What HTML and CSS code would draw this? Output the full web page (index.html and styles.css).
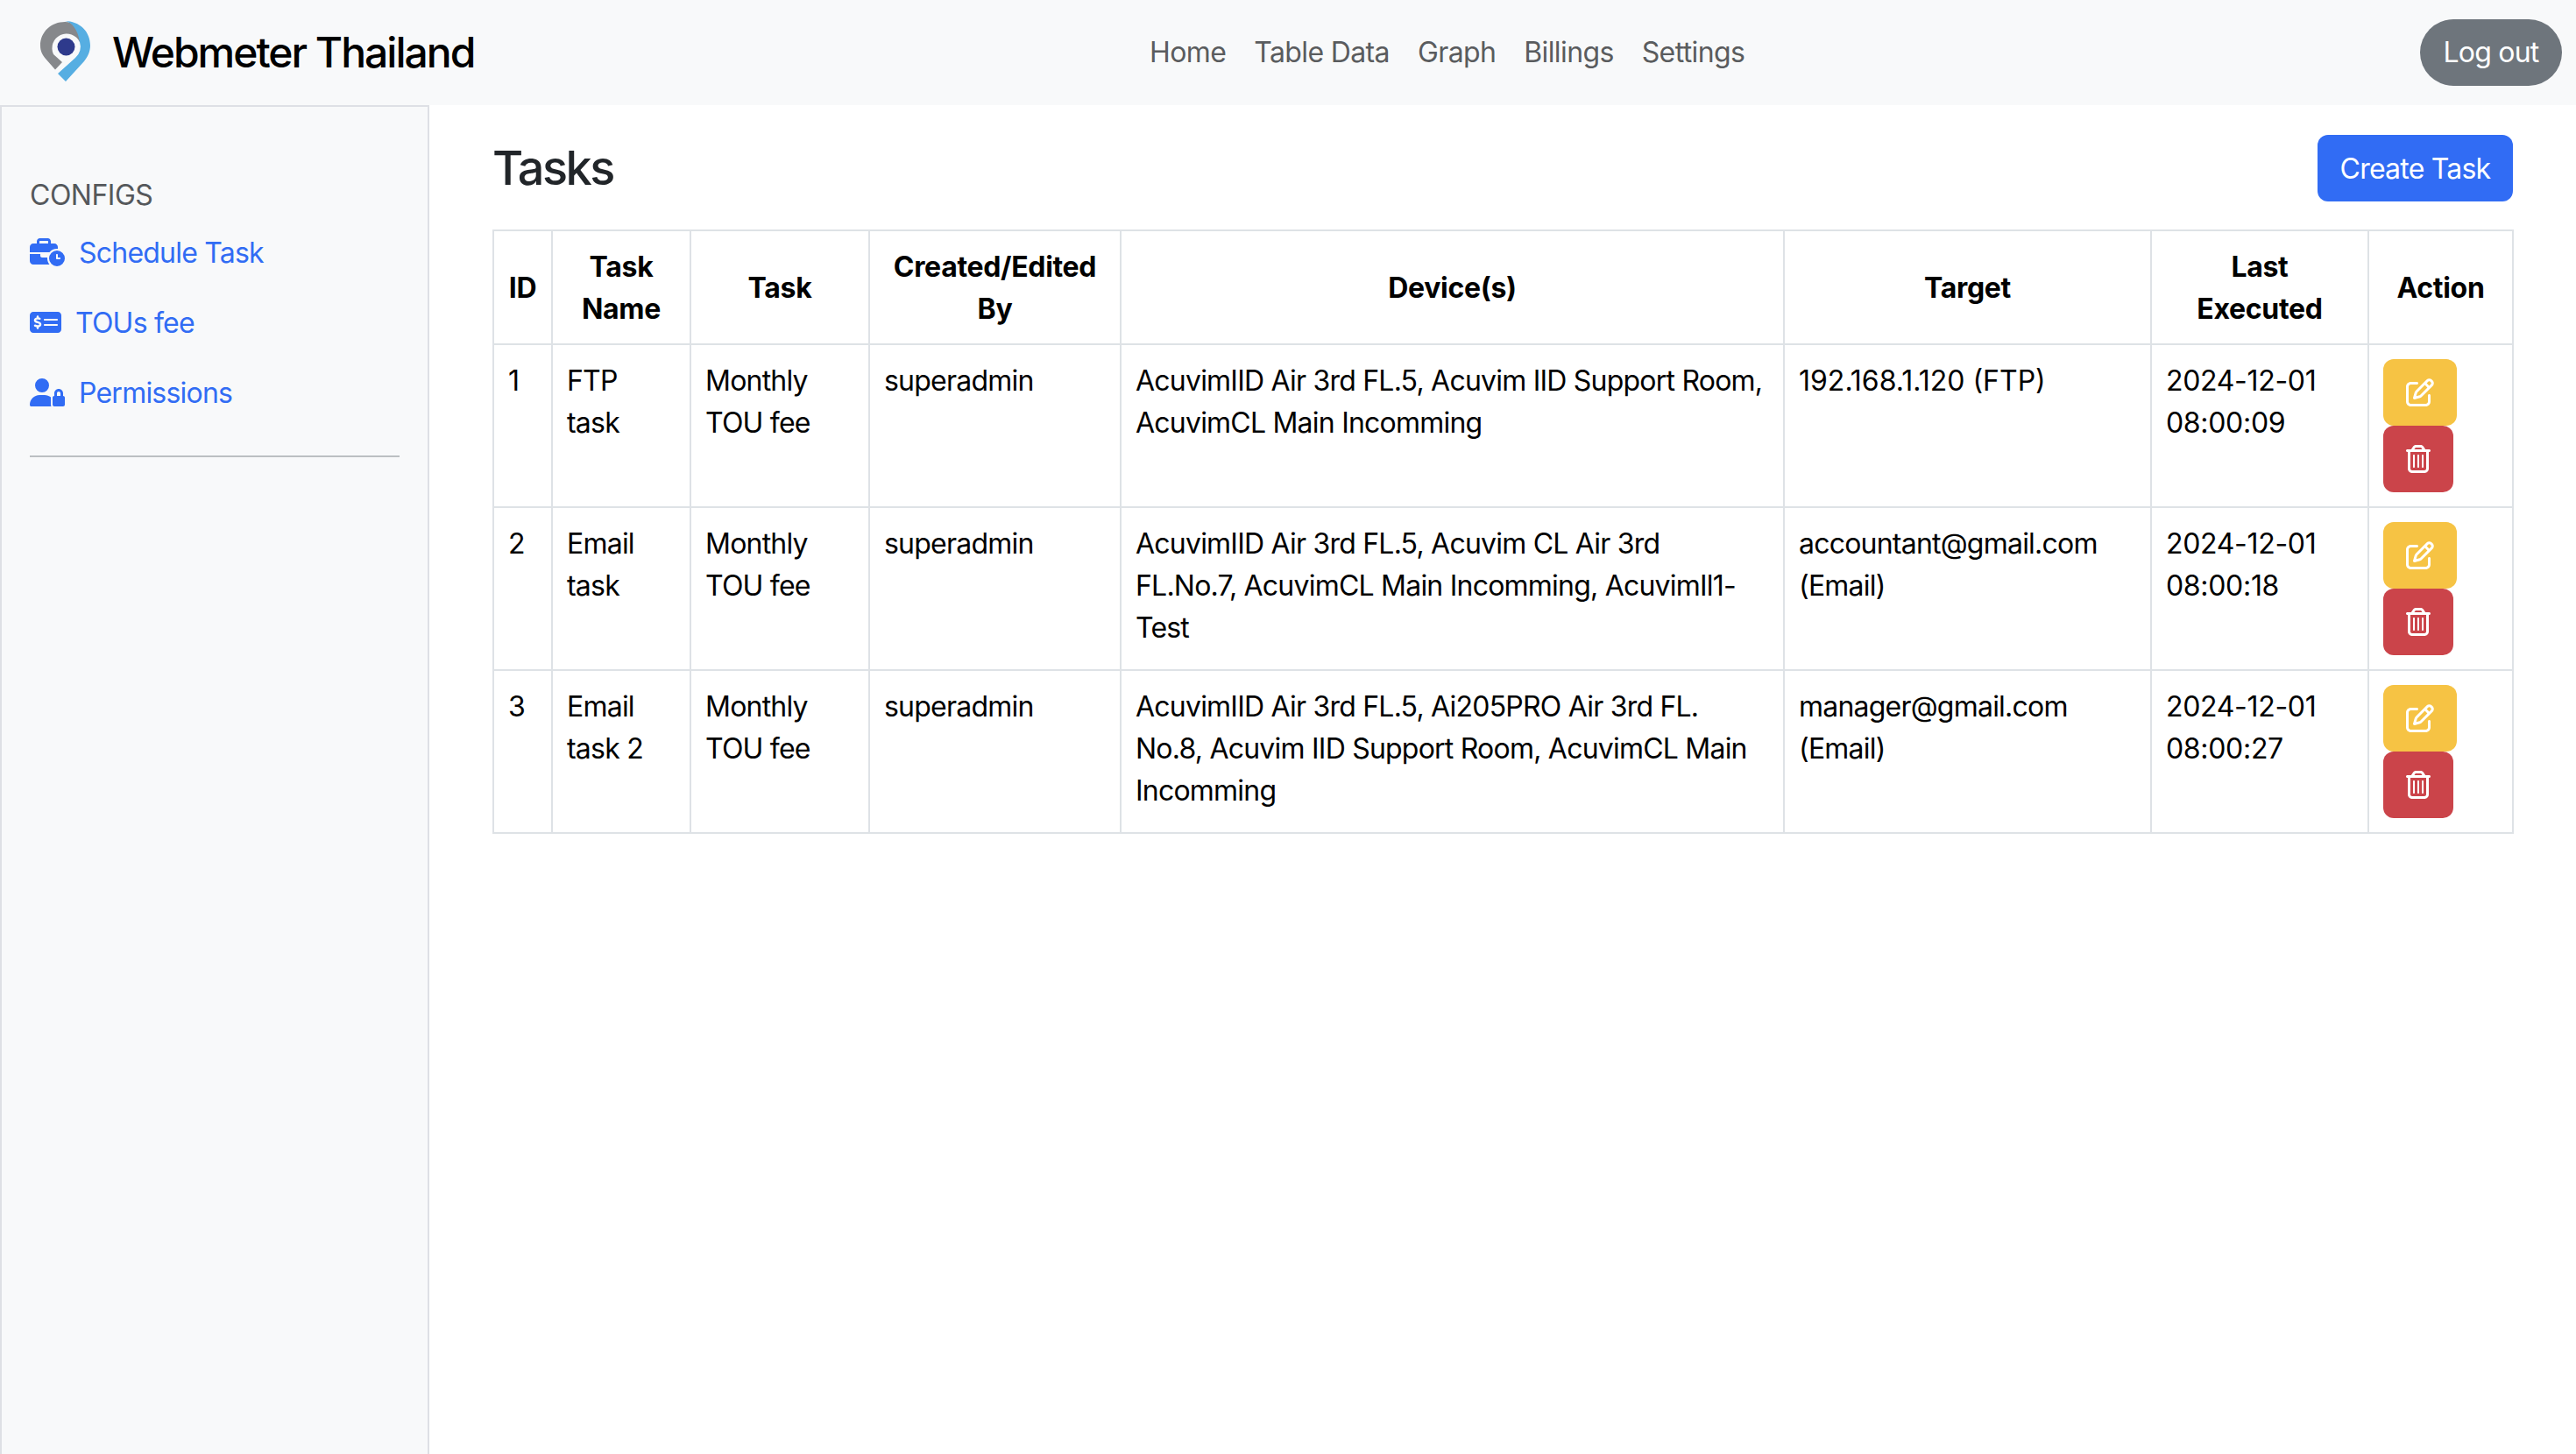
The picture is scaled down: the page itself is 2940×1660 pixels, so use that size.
FILE: index.html
```html
<!DOCTYPE html>
<html lang="en">
<head>
<meta charset="utf-8">
<title>Tasks - Webmeter Thailand</title>
<link rel="stylesheet" href="styles.css">
</head>
<body>
<svg class="defs" width="0" height="0" aria-hidden="true">
  <symbol id="i-edit" viewBox="0 0 512 512"><path d="M441 58.9L453.1 71c9.4 9.4 9.4 24.6 0 33.9L424 134.1 377.9 88 407 58.9c9.4-9.4 24.6-9.4 33.9 0zM209.8 256.2L344 121.9 390.1 168 255.8 302.2c-2.9 2.9-6.5 5-10.4 6.1l-58.5 16.7 16.7-58.5c1.1-3.9 3.2-7.5 6.1-10.4zM373.1 25L175.8 222.2c-8.7 8.7-15 19.4-18.3 31.1l-28.6 100c-2.4 8.4-.1 17.4 6.1 23.6s15.2 8.5 23.6 6.1l100-28.6c11.8-3.4 22.5-9.7 31.1-18.3L487 138.9c28.1-28.1 28.1-73.7 0-101.8L474.9 25C446.8-3.1 401.2-3.1 373.1 25zM88 64C39.4 64 0 103.4 0 152V424c0 48.6 39.4 88 88 88H360c48.6 0 88-39.4 88-88V312c0-13.3-10.7-24-24-24s-24 10.7-24 24V424c0 22.1-17.9 40-40 40H88c-22.1 0-40-17.9-40-40V152c0-22.1 17.9-40 40-40H200c13.3 0 24-10.7 24-24s-10.7-24-24-24H88z"/></symbol>
  <symbol id="i-trash" viewBox="0 0 448 512"><path d="M170.5 51.6L151.5 80h145l-19-28.4c-1.5-2.2-4-3.6-6.7-3.6H177.1c-2.7 0-5.2 1.3-6.7 3.6zm147-26.6L354.2 80H368h48 8c13.3 0 24 10.7 24 24s-10.7 24-24 24h-8V432c0 44.2-35.8 80-80 80H112c-44.2 0-80-35.8-80-80V128H24c-13.3 0-24-10.7-24-24S10.7 80 24 80h8H80 93.8l36.7-55.1C140.9 9.4 158.4 0 177.1 0h93.7c18.7 0 36.2 9.4 46.6 24.9zM80 128V432c0 17.7 14.3 32 32 32H336c17.7 0 32-14.3 32-32V128H80zm80 64V400c0 8.8-7.2 16-16 16s-16-7.2-16-16V192c0-8.8 7.2-16 16-16s16 7.2 16 16zm80 0V400c0 8.8-7.2 16-16 16s-16-7.2-16-16V192c0-8.8 7.2-16 16-16s16 7.2 16 16zm80 0V400c0 8.8-7.2 16-16 16s-16-7.2-16-16V192c0-8.8 7.2-16 16-16s16 7.2 16 16z"/></symbol>
</svg>

<header class="navbar">
  <a class="brand" href="#">
    <svg class="logo" viewBox="0 0 80 90" width="80" height="90" aria-hidden="true">
      <path fill="#86888b" d="M27 63.5L16 51C12 46 10 42 10 36C10 20 23 9 38 9C48 9 54 16 56 32L55 32A16.5 16.5 0 0 0 25 46L35 55Z"/>
      <path fill="#56aee2" d="M38 8C55 8 67 20 67 36C67 43 64 49 60 54L39 77L30 68L50 50A16.5 16.5 0 0 0 55 32C53 18 46 9 38 8Z"/>
      <circle fill="#2e3a8c" cx="39.5" cy="37.5" r="10"/>
    </svg>
    <span class="brand-name">Webmeter Thailand</span>
  </a>
  <nav class="nav-links">
    <a href="#">Home</a>
    <a href="#">Table Data</a>
    <a href="#">Graph</a>
    <a href="#">Billings</a>
    <a href="#">Settings</a>
  </nav>
  <button class="btn btn-logout">Log out</button>
</header>

<div class="layout">
  <aside class="sidebar">
    <div class="side-heading">CONFIGS</div>
    <a class="side-link" href="#">
      <svg class="ic-40" viewBox="0 0 640 512" aria-hidden="true"><path d="M184 48H328c4.4 0 8 3.6 8 8V96H176V56c0-4.4 3.6-8 8-8zm-56 8V96H64C28.7 96 0 124.7 0 160v96H192 352h8.2c32.3-39.1 81.1-64 135.8-64c5.4 0 10.7 .2 16 .7V160c0-35.3-28.7-64-64-64H384V56c0-30.9-25.1-56-56-56H184c-30.9 0-56 25.1-56 56zM320 352H224c-17.7 0-32-14.3-32-32V288H0V416c0 35.3 28.7 64 64 64H360.2C335.1 449.6 320 410.5 320 368c0-5.4 .2-10.7 .7-16l-.7 0zm320 16a144 144 0 1 0 -288 0 144 144 0 1 0 288 0zM496 288c8.8 0 16 7.2 16 16v48h32c8.8 0 16 7.2 16 16s-7.2 16-16 16H496c-8.8 0-16-7.2-16-16V304c0-8.8 7.2-16 16-16z"/></svg>
      <span>Schedule Task</span>
    </a>
    <a class="side-link" href="#">
      <svg class="ic-36" viewBox="0 0 576 512" aria-hidden="true"><path d="M64 64C28.7 64 0 92.7 0 128V384c0 35.3 28.7 64 64 64H512c35.3 0 64-28.7 64-64V128c0-35.3-28.7-64-64-64H64zM272 192H496c8.8 0 16 7.2 16 16s-7.2 16-16 16H272c-8.8 0-16-7.2-16-16s7.2-16 16-16zM256 304c0-8.8 7.2-16 16-16H496c8.8 0 16 7.2 16 16s-7.2 16-16 16H272c-8.8 0-16-7.2-16-16zM164 152v13.9c7.5 1.2 14.6 2.9 21.1 4.7c10.7 2.8 17 13.8 14.2 24.5s-13.8 17-24.5 14.2c-11-2.9-21.6-5-31.2-5.2c-7.9-.1-16 1.8-21.5 5c-4.8 2.8-6.2 5.6-6.2 9.3c0 1.8 .1 3.5 5.3 6.7c6.3 3.8 15.5 6.7 28.3 10.5l.7 .2c11.2 3.4 25.6 7.7 37.1 15c12.9 8.1 24.3 21.3 24.6 41.6c.3 20.9-10.5 36.1-24.8 45c-7.2 4.5-15.2 7.3-23.2 9V360c0 11-9 20-20 20s-20-9-20-20V345.4c-10.3-2.2-20-5.5-28.2-8.4l0 0 0 0c-2.1-.7-4.1-1.4-6.1-2.1c-10.5-3.5-16.1-14.8-12.6-25.3s14.8-16.1 25.3-12.6c2.5 .8 4.9 1.7 7.2 2.4c13.6 4.6 24 8.1 35.1 8.5c8.6 .3 16.5-1.6 21.4-4.7c4.1-2.5 6-5.5 5.9-10.5c0-2.9-.8-5-5.9-8.2c-6.3-4-15.4-6.9-28-10.7l-1.7-.5c-10.9-3.3-24.6-7.4-35.6-14c-12.7-7.7-24.6-20.5-24.7-40.7c-.1-21.1 11.8-35.7 25.8-43.9c6.9-4.1 14.5-6.8 22.2-8.5V152c0-11 9-20 20-20s20 9 20 20z"/></svg>
      <span>TOUs fee</span>
    </a>
    <a class="side-link" href="#">
      <svg class="ic-40" viewBox="0 0 640 512" aria-hidden="true"><path d="M224 256A128 128 0 1 0 224 0a128 128 0 1 0 0 256zm-45.7 48C79.8 304 0 383.8 0 482.3C0 498.7 13.3 512 29.7 512H392.6c-5.4-9.4-8.6-20.3-8.6-32V352c0-2.1 .1-4.2 .3-6.3c-31-26-71-41.7-114.6-41.7H178.3zM528 240c17.7 0 32 14.3 32 32v48H496V272c0-17.7 14.3-32 32-32zm-80 32v48c-17.7 0-32 14.3-32 32V480c0 17.7 14.3 32 32 32H608c17.7 0 32-14.3 32-32V352c0-17.7-14.3-32-32-32V272c0-44.2-35.8-80-80-80s-80 35.8-80 80z"/></svg>
      <span>Permissions</span>
    </a>
    <hr class="side-rule">
  </aside>

  <main class="content">
    <div class="title-row">
      <h1 class="page-title">Tasks</h1>
      <button class="btn btn-create">Create Task</button>
    </div>
    <table class="tasks">
      <colgroup>
        <col class="c-id"><col class="c-name"><col class="c-task"><col class="c-by"><col class="c-dev"><col class="c-target"><col class="c-last"><col class="c-act">
      </colgroup>
      <thead>
        <tr>
          <th>ID</th><th>Task Name</th><th>Task</th><th>Created/Edited By</th><th>Device(s)</th><th>Target</th><th>Last Executed</th><th>Action</th>
        </tr>
      </thead>
      <tbody>
        <tr>
          <td>1</td><td>FTP task</td><td>Monthly TOU fee</td><td>superadmin</td>
          <td>AcuvimIID Air 3rd FL.5, Acuvim IID Support Room, AcuvimCL Main Incomming</td>
          <td class="ip">192.168.1.120 (FTP)</td><td class="stamp">2024-12-01 08:00:09</td>
          <td class="actions">
            <button class="btn btn-edit"><svg class="ic-btn" aria-hidden="true"><use href="#i-edit"/></svg></button>
            <button class="btn btn-del"><svg class="ic-btn" aria-hidden="true"><use href="#i-trash"/></svg></button>
          </td>
        </tr>
        <tr>
          <td>2</td><td>Email task</td><td>Monthly TOU fee</td><td>superadmin</td>
          <td>AcuvimIID Air 3rd FL.5, Acuvim CL Air 3rd<br>FL.No.7, AcuvimCL Main Incomming, AcuvimIl1-Test</td>
          <td>accountant@gmail.com (Email)</td><td class="stamp">2024-12-01 08:00:18</td>
          <td class="actions">
            <button class="btn btn-edit"><svg class="ic-btn" aria-hidden="true"><use href="#i-edit"/></svg></button>
            <button class="btn btn-del"><svg class="ic-btn" aria-hidden="true"><use href="#i-trash"/></svg></button>
          </td>
        </tr>
        <tr>
          <td>3</td><td>Email task 2</td><td>Monthly TOU fee</td><td>superadmin</td>
          <td>AcuvimIID Air 3rd FL.5, Ai205PRO Air 3rd FL. No.8, Acuvim IID Support Room, AcuvimCL Main Incomming</td>
          <td>manager@gmail.com (Email)</td><td class="stamp">2024-12-01 08:00:27</td>
          <td class="actions">
            <button class="btn btn-edit"><svg class="ic-btn" aria-hidden="true"><use href="#i-edit"/></svg></button>
            <button class="btn btn-del"><svg class="ic-btn" aria-hidden="true"><use href="#i-trash"/></svg></button>
          </td>
        </tr>
      </tbody>
    </table>
  </main>
</div>
</body>
</html>
```
FILE: styles.css
```css
* { box-sizing: border-box; }

html, body { height: 100%; }

body {
  margin: 0;
  display: flex;
  flex-direction: column;
  min-height: 1660px;
  font-family: Inter, "Liberation Sans", sans-serif;
  font-size: 32px;
  line-height: 1.5;
  letter-spacing: -0.78px;
  color: #212529;
  background: #fff;
}

a { text-decoration: none; }

.defs { position: absolute; }

.navbar {
  display: flex;
  align-items: center;
  height: 120px;
  padding: 0 16px 0 36px;
  background: #f8f9fa;
  flex: none;
}

.brand { display: flex; align-items: center; gap: 12px; color: #000; }
.logo { display: block; margin-top: 2px; }
.brand-name { font-size: 48px; font-weight: 500; line-height: 1.5; letter-spacing: -2px; }

.nav-links {
  flex: 1;
  display: flex;
  justify-content: center;
  gap: 32px;
  letter-spacing: -0.62px;
}
.nav-links a { color: #5a5c5e; }

.btn {
  display: block;
  border: 0;
  height: 76px;
  font: inherit;
  letter-spacing: inherit;
  color: #fff;
  padding: 0;
}
.btn-logout { width: 162px; border-radius: 38px; background: #6e757c; }
.btn-create { width: 223px; border-radius: 12px; background: #316cf4; padding-top: 2px; }
.btn-edit { width: 84px; border-radius: 12px; background: #f6c344; display: flex; align-items: center; justify-content: center; }
.btn-del { width: 80px; border-radius: 12px; background: #cb444a; display: flex; align-items: center; justify-content: center; }
.ic-btn { width: 32px; height: 32px; fill: #fff; display: block; }

.layout { flex: 1; display: flex; }

.sidebar {
  width: 490px;
  flex: none;
  padding: 77px 32px 0;
  background: #f8f9fa;
  border: 2px solid #dee0e5;
  border-bottom: 0;
}

.side-heading { color: #55585b; margin-bottom: 1px; letter-spacing: -0.5px; }

.side-link {
  display: flex;
  align-items: center;
  gap: 16px;
  height: 80px;
  color: #316cf4;
  fill: #316cf4;
}
.side-link span { padding-top: 2px; }
.ic-40 { width: 40px; height: 32px; flex: none; }
.ic-36 { width: 36px; height: 32px; flex: none; }

.side-rule {
  margin: 32px 0 0;
  border: 0;
  height: 2px;
  background: #bcbfc2;
}

.content {
  flex: 1;
  min-width: 0;
  padding: 34px 72px 0;
}

.title-row {
  display: flex;
  align-items: center;
  justify-content: space-between;
  margin-bottom: 32px;
}

.page-title {
  margin: 0;
  font-size: 54px;
  font-weight: 500;
  line-height: 1.2;
  letter-spacing: -2.5px;
}

.tasks {
  width: 2305px;
  table-layout: fixed;
  border-collapse: collapse;
  color: #000;
}

.tasks th, .tasks td {
  border: 2px solid #dee2e6;
  padding: 17px 16px 15px;
}
.tasks th { text-align: center; vertical-align: middle; font-weight: 700; letter-spacing: -0.32px; }
.tasks td { text-align: left; vertical-align: top; }
.tasks td.ip { letter-spacing: 0; }
.tasks td.stamp { letter-spacing: -0.32px; }
.tasks td.actions { padding: 16px; }

.c-id { width: 67px; }
.c-name { width: 158px; }
.c-task { width: 204px; }
.c-by { width: 287px; }
.c-dev { width: 757px; }
.c-target { width: 419px; }
.c-last { width: 248px; }
.c-act { width: 165px; }
```
